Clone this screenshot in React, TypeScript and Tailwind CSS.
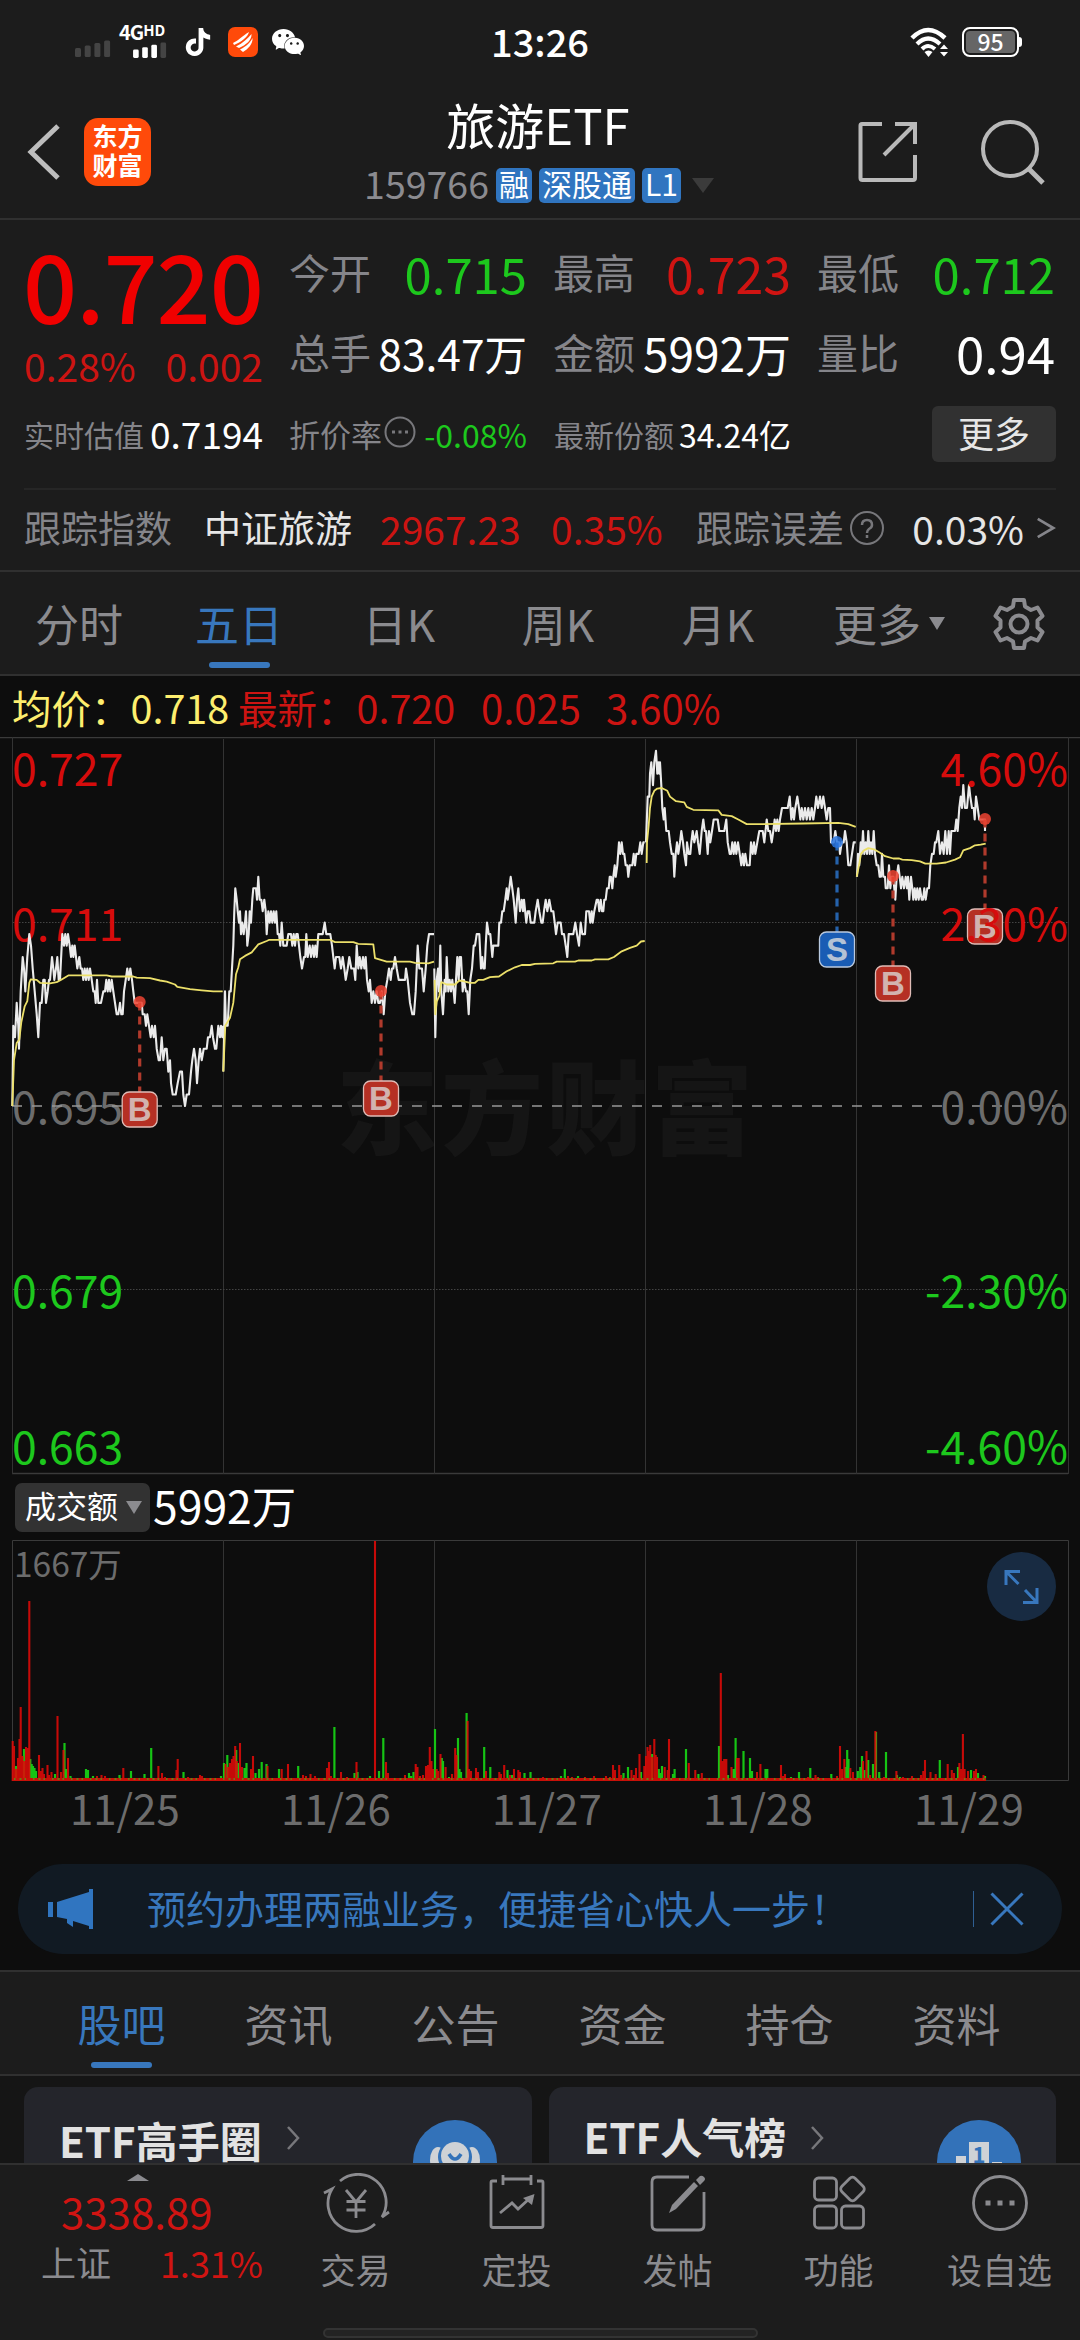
import type { ReactNode } from 'react';
import { SiTiktok, SiWechat } from 'react-icons/si';
import clsx from 'clsx';

const FONT = "font-['Noto_Sans_CJK_SC','Noto_Sans',sans-serif]";

/* ---------- chart data ---------- */

interface DayTrace {
  /** Horizontal origin of the samples, in thirds of a pixel. */
  origin: number;
  /** "x,tick" pairs; one tick is 0.001 above the 0.695 base price. */
  price: string;
  average: string;
}

const DAYS: DayTrace[] = [
  {
    origin: 0,
    price:
      '37,0 40,7 45,6 50,9 55,7 57,5 62,10 68,13 72,12 76,10 82,13 88,15 93,14 98,12 104,10 110,8 115,6 120,9 125,9 130,11 134,11 138,9 143,10 147,11 150,11 156,13 160,12 163,11 168,12 172,13 176,11 180,11 187,15 192,14 196,15 200,14 204,15 209,14 213,13 217,14 220,13 224,14 228,13 232,12 238,13 242,12 246,12 250,11 254,12 258,11 262,12 266,11 270,12 275,11 280,10 284,10 287,9 291,11 295,9 303,9 310,10 315,10 319,11 323,10 327,11 331,10 335,11 340,10 345,9 350,8 355,8 360,9 364,8 368,8 372,10 377,11 382,12 386,11 391,12 396,11 400,10 404,9 425,9 428,8 434,8 438,7 442,8 447,7 452,6 456,7 461,6 465,7 470,5 476,4 480,4 485,6 490,4 495,5 500,5 505,3 510,4 513,2 518,1 527,1 533,2 540,3 546,3 550,1 555,0 560,1 567,1 573,3 577,4 582,5 587,4 591,2 596,4 600,5 605,4 611,5 620,5 624,6 630,6 635,7 639,6 645,5 649,5 655,7 660,6 663,7 667,6 669,7',
    average:
      '37,0 42,4 50,5.5 58,5.8 64,7.3 74,8.7 82,9.15 88,10.75 92,11.05 110,11 120,10.75 150,10.7 170,10.8 185,11.05 205,11.4 320,11.4 335,11.3 400,11.3 410,11.2 450,11.15 480,10.95 500,10.85 525,10.6 532,10.4 570,10.2 605,10.1 640,10 668,10',
  },
  {
    origin: 0,
    price:
      '670,3 675,10 678,7 683,7 688,10 692,10 696,12 700,14 703,17 706,19 710,18 713,17 717,16 720,17 723,15 727,16 731,15 735,16 738,17 742,14 746,15 749,17 753,16 757,18 760,19 768,19 771,18 775,20 779,18 784,18 788,17 793,18 797,17 800,15 805,17 809,16 813,17 817,16 821,17 825,16 829,17 833,15 837,15 841,14 845,16 850,14 860,14 865,15 873,15 877,14 881,15 885,14 889,15 893,15 897,14 901,13 906,12 912,13 916,13 919,15 923,13 929,14 933,13 938,14 942,13 946,14 950,13 955,15 968,15 974,16 979,15 991,15 996,14 1000,13 1004,12 1008,13 1018,13 1023,12 1028,13 1033,12 1037,11 1043,12 1048,13 1054,12 1062,12 1066,11 1070,14 1075,12 1079,13 1084,12 1089,13 1093,12 1097,13 1101,11 1106,10 1110,11 1115,9 1120,10 1125,9 1130,10 1135,9 1140,9 1145,10 1151,8 1156,10 1162,11 1167,12 1172,11 1176,12 1180,12 1185,13 1190,12 1196,11 1215,11 1218,12 1223,11 1230,9 1237,8 1242,8 1247,10 1253,14 1258,12 1266,12 1271,10 1277,12 1282,14 1287,15 1302,15',
    average:
      '670,3 676,7 690,7.7 700,9 708,11.5 715,12.1 720,12.8 735,13.1 755,13.4 775,14.1 800,14.4 808,14.5 990,14.5 1005,14.3 1060,14.3 1075,14.15 1120,14.1 1125,12.9 1160,12.6 1230,12.6 1245,12.5 1285,12.45 1302,12.6',
  },
  {
    origin: 1260,
    price:
      '43,12 46,6 50,11 54,12 57,10 61,14 64,10 69,8 74,11 77,10 80,13 85,10 89,11 93,10 97,11 101,10 104,9 108,11 112,13 116,11 119,13 123,13 128,10 132,11 138,10 142,10 146,8 151,11 156,12 161,14 165,14 170,15 178,15 183,12 187,13 190,12 194,12 197,14 201,16 206,15 211,15 217,13 220,14 235,14 238,16 243,16 247,17 251,17 256,18 260,19 263,18 268,19 272,20 277,19 281,18 287,16 291,18 295,19 300,17 305,18 309,17 312,18 319,16 323,17 328,17 332,16 343,16 347,17 353,18 358,17 364,16 368,16 372,17 377,18 382,17 388,18 394,17 400,17 404,16 408,15 413,16 422,16 426,15 432,15 437,14 442,13 446,15 460,15 466,16 471,15 477,14 482,16 487,15 495,15 499,17 507,17 511,16 515,17 518,16 523,17 530,18 534,18 538,17 542,18 546,17 550,17 553,18 557,18 561,19 566,19 569,20 573,20 577,19 580,20 584,21 587,20 592,21 597,23 601,22 605,23 609,22 613,22 617,21 622,21 625,20 629,21 637,21 641,22 645,21 649,22 656,22 661,23 665,22 670,23 674,23',
    average:
      '44,11 46,8 50,9.1 58,9.6 64,10.8 80,10.6 105,10.6 118,10.95 130,10.9 150,10.75 165,10.75 175,11 190,11 210,11.25 237,11.3 260,11.75 285,12.1 305,12.3 330,12.3 345,12.4 400,12.45 410,12.6 465,12.6 475,12.7 515,12.7 525,12.8 565,12.8 582,13 605,13.5 630,13.8 650,14 663,14.35 674,14.4',
  },
  {
    origin: 1260,
    price:
      '678,23 683,27 688,27 690,29 694,30 699,28 703,30 708,31 712,29 715,30 718,29 720,30 724,28 727,26 731,25 734,26 739,24 746,24 750,23 755,22 760,22 763,20 767,22 771,23 775,22 780,23 784,24 789,23 793,22 798,21 801,23 806,22 811,22 814,23 818,24 823,23 830,24 834,23 839,22 845,24 850,25 854,24 858,24 863,22 867,24 871,23 876,24 881,25 893,25 898,24 913,24 919,25 923,23 929,22 933,22 937,23 941,22 945,23 949,22 954,23 959,22 964,21 968,22 972,21 976,22 981,21 989,21 993,23 998,22 1002,23 1006,22 1012,23 1018,24 1028,24 1033,23 1040,25 1045,24 1050,24 1055,23 1060,24 1064,25 1068,24 1072,25 1076,24 1080,25 1086,26 1103,26 1109,27 1114,25 1118,26 1122,25 1126,26 1132,27 1137,26 1141,25 1145,26 1150,25 1155,26 1160,25 1165,26 1170,25 1175,26 1180,25 1185,26 1189,27 1194,26 1200,27 1205,26 1210,27 1215,26 1220,25 1225,26 1230,26 1233,23 1241,23 1246,24 1251,23 1257,23 1260,22 1265,23 1271,23 1275,24 1280,23 1285,21 1291,21 1296,22 1301,23 1307,23',
    average:
      '680,21.2 681,23 686,24.5 690,26 695,27 703,27.5 712,27.7 725,27.75 742,27.5 750,27 768,26.6 793,26.5 800,26.1 820,25.85 895,25.8 905,25.4 935,25.3 955,25 980,24.6 1018,24.6 1150,24.65 1255,24.7 1285,24.6 1307,24.35',
  },
  {
    origin: 2220,
    price:
      '351,20 354,22 358,21 362,23 365,22 369,24 373,22 377,23 381,22 385,24 389,22 393,23 397,22 401,24 405,22 410,21 415,21 419,20 423,20 426,22 430,20 435,20 437,19 443,19 447,21 451,19 455,20 460,20 463,19 466,18 470,20 475,21 479,20 483,19 487,20 492,19 497,20 501,19 504,20 508,18 513,20 517,19 520,18 524,19 528,18 532,19 536,18 540,19 545,18 549,18 553,19 557,18 562,19 567,19 571,21 576,22 581,22 585,23 589,23 595,24 600,22 606,23 611,22 616,24 621,22 626,24 630,22 634,24 645,24 649,25 653,24 658,26 662,27 666,26 670,28 675,26 681,26 687,28 691,27 696,26 701,26 704,25 708,27 713,26 718,25 735,25 735,24',
    average:
      '350,20 357,21 363,22 372,22.3 385,22.5 402,22.4 420,22.1 435,21.8 460,21.6 478,21.6 487,21.5 515,21.45 540,21.35 556,21.15 590,21.15 618,21.25 645,21.5 660,21.7 670,22.3 690,22.5 705,22.75 722,22.8 737,22.9',
  },
];

// "x:height" pairs per colour, in pixels.
const VOLUME_UP =
  '12.7:40 14:35 16:12 18:23 19.5:42 20.7:74 22.5:25 24.3:20 26:34 27.5:33 29.3:180 39:26 41:10 42.5:13 44:7 47.5:16 49:6 51.5:9 57.5:65 61:9 63.5:31 68:23 97:5 101.5:6 105:5 123.3:13 158.4:15 162:8 165:4 176.5:11 177.7:22 188:4 200:6 202:5 225.5:17 228:14 230:18 232:22 233.5:25 235.2:35 236.8:20 240:38 242:14 251:12 253:25 267.5:15 281.7:12 288:17 303:6 306:5 310.5:7 315:5 327:13 329:19 331:5 341:9 347:4 356.5:19 375:240 386:19 388:8 405:6 415.7:17 417.5:14 420:5 423:6 426:15 428:16 429.8:34 431.5:20 433:12 436.7:12 438:10 440.5:27 445.6:14 452:7 455.2:33 456.5:26 467.6:60 469:12 471:10 476:13 478:9 486:10 499.3:9 501:7 504.2:16 510:6 514:12 518.3:11 520:9 543:4 568:5 572:4 585:4 594:5 606:5 610:4 613:16 615:11 619.2:16 621:6 631.5:11 634:6 636:13 639.5:27 644.3:15 646:25 647.5:34 648.8:30 650.2:36 652:24 654.3:42 655.7:26 657:24 664.7:14 667.7:11 669:42 688.8:18 695.3:11 701.8:8 720.8:108 722.9:20 724.2:22 726.3:22 731.5:14 737:23 738.7:23 757:9 760.4:17 781:16 783:5 785:7 808:4 815.5:6 818:4 837:5 840:35 842:12 844.4:22 850.3:13 853:9 863:20 866.5:30 870:6 875.4:50 884:4 896.4:10 903:4 912:5 921:6 923.3:10 925:21 930.5:9 935.7:7 947.7:17 951.8:11 954:8 959.4:18 961:12 962.9:47 964.6:12 968:10 974:10 976:12 983.5:6';
const VOLUME_DOWN =
  '16:15 24:32 30.3:22 31.7:17 33:15 34.5:13 36:10 55:7 64.5:38 66:12 70.5:5 86:12 88:11 93:5 119.5:6 131:10 144.5:7 151.2:33 183.5:9 221:5 224:18 227.3:26 236.2:31 238:18 244.5:13 246.5:18 255.5:8 259:12 261.7:19 266.5:17 279:12 298.2:15 334.4:54 354.5:8 357.5:9 370:5 379:10 383.3:43 409:8 411:5 413.5:9 435:52 441.8:23 443:20 449:4 458:43 459.5:12 461:9 466.6:68 484.2:34 490.3:14 507.5:11 512:6 524.5:8 530.5:9 561:5 564.8:12 578:5 623.5:8 628:14 641:9 652:27 658.8:12 660:8 662:15 673:7 674.6:12 686:32 698.4:7 719:35 728:6 733.5:12 735.6:43 743.5:30 750:23 752:10 765.5:12 767.3:12 791:4 799:9 810.3:13 831.3:7 845.5:14 847.2:31 848.5:22 857.8:10 860.3:14 862:25 864.4:11 868.2:21 873:17 876:49 879.2:9 886:29 897:6 900:4 939.8:21 958:14 971:11 978:8 985:5';

const CELL_LINES = [223.5, 434.5, 645.5, 856.5];

const MARKERS = [
  { x: 139.7, dot: 265, box: 355, kind: 'B' },
  { x: 381, dot: 254, box: 344, kind: 'B' },
  { x: 837, dot: 105, box: 195, kind: 'S' },
  { x: 893, dot: 139, box: 229, kind: 'B' },
  { x: 985, dot: 82, box: 172, kind: 'B' },
];

const AXIS = [
  { y: 49, price: '0.727', change: '4.60%', fill: '#d60c0c' },
  { y: 204, price: '0.711', change: '2.30%', fill: '#d60c0c' },
  { y: 387, price: '0.695', change: '0.00%', fill: '#6c6c6c' },
  { y: 571, price: '0.679', change: '-2.30%', fill: '#1dc81d' },
  { y: 727, price: '0.663', change: '-4.60%', fill: '#1dc81d' },
];

function tracePoints(points: string, origin: number) {
  return points
    .split(' ')
    .map((pair) => {
      const [x, tick] = pair.split(',').map(Number);
      return `${((origin + x) / 3).toFixed(1)},${(369 - tick * 11.46).toFixed(1)}`;
    })
    .join(' ');
}

function barsPath(bars: string) {
  return bars
    .split(' ')
    .map((bar) => {
      const [x, height] = bar.split(':').map(Number);
      return `M${x} 241V${241 - height}`;
    })
    .join('');
}

/* ---------- header ---------- */

function SignalBars({ className, fills }: { className: string; fills: string[] }) {
  return (
    <svg viewBox="0 0 36 17" className={className}>
      {fills.map((fill, i) => (
        <rect key={i} x={i * 9.7} y={8 - i * 2.5} width="6" height={9 + i * 2.5} rx="1.5" fill={fill} />
      ))}
    </svg>
  );
}

function StatusBar() {
  return (
    <div className="flex h-[84px] items-center pl-[75px] pr-[58px] text-white">
      <SignalBars className="mt-3 h-[17px] w-9" fills={['#444', '#444', '#444', '#444']} />
      <div className="ml-2 flex h-8 w-[48px] flex-col">
        <div className="flex h-4 items-start text-[20px] font-bold leading-[12px] tracking-[-1px]">
          4G<span className="text-[15px] leading-[8px] tracking-[0px]">HD</span>
        </div>
        <SignalBars className="ml-[13px] h-4 w-9" fills={['#fff', '#fff', '#fff', '#444']} />
      </div>
      <SiTiktok className="ml-[17px] h-[30px] w-[28px]" />
      <div className="ml-4 flex size-[30px] items-center justify-center rounded-[7px] bg-[#ff4a0a]">
        <svg viewBox="0 0 30 30" className="size-[30px]" fill="#fff">
          <path d="M5 16C10 14 14 9 21 5C20 10 13 15 6 18Z" />
          <path d="M8 19.500C15 16 20 11 23.500 7C24 13 18 18 11 21Z" />
          <path d="M12 22.500C19 19 22.500 15 24.500 11C25 17 20 22 15 25Z" />
        </svg>
      </div>
      <SiWechat className="ml-[14px] size-[32px]" />
      <div className="ml-[187px] mt-[-3px] text-[38px] font-medium leading-[38px]">13:26</div>
      <svg viewBox="0 0 40 30" className="ml-auto h-[30px] w-10" fill="none" stroke="#fff">
        <path d="M2 11Q18 -5 35 11" strokeWidth="4.5" />
        <path d="M7 17Q18 6 30 17" strokeWidth="4.2" />
        <path d="M12 22Q18 16 25 22" strokeWidth="4" />
        <path d="M14.500 25Q18.500 22 22.500 25L18.500 30Z" fill="#fff" stroke="none" />
        <path d="M30 22L34 17.500L38 22ZM30 25L34 29.500L38 25Z" fill="#fff" stroke="none" />
      </svg>
      <div className="ml-3 flex items-center">
        <div className="flex h-[30px] w-[57px] items-center justify-center rounded-[8px] border-[2.5px] border-white bg-[#1c1c1c] p-[2px]">
          <div className="flex h-full w-full items-center justify-center rounded-[4px] bg-[#666] pb-[3px] text-[23px] font-medium leading-[20px]">
            95
          </div>
        </div>
        <div className="h-[10px] w-[3px] rounded-r-sm bg-white" />
      </div>
    </div>
  );
}

function Badge({ children }: { children: ReactNode }) {
  return (
    <span className="flex h-[35px] items-center rounded-[5px] bg-[#3075c0] px-[3px] pb-[4px] text-[30px] leading-none text-white">
      {children}
    </span>
  );
}

function TitleBar() {
  return (
    <header className="flex h-[136px] items-start border-b-2 border-[#303030] pl-[27px] pr-[34px]">
      <svg viewBox="0 0 34 58" className="mt-[39px] h-[58px] w-[34px]" fill="none" stroke="#bdbdbd" strokeWidth="5">
        <path d="M31 3L4 29L31 55" />
      </svg>
      <div className="ml-[23px] mt-[34px] flex h-[68px] w-[67px] flex-col items-center justify-center rounded-[14px] bg-[#ff4a0a] pb-[5px] text-[25px] font-bold leading-[29px] text-white">
        <span>东方</span>
        <span>财富</span>
      </div>
      <div className="ml-[212px] flex w-[352px] flex-col items-center">
        <h1 className="mr-[2px] mt-[12px] text-[49px] leading-[56px] text-white">旅游ETF</h1>
        <div className="mt-[11px] flex h-[44px] items-center gap-[7px]">
          <span className="pb-1 text-[37.5px] leading-10 text-[#8b8b90]">159766</span>
          <Badge>融</Badge>
          <Badge>深股通</Badge>
          <Badge>L1</Badge>
          <svg viewBox="0 0 22 15" className="ml-1 h-[15px] w-[22px]" fill="#3b3b3b">
            <path d="M0 0H22L11 15Z" />
          </svg>
        </div>
      </div>
      <svg viewBox="0 0 60 62" className="ml-auto mt-[37px] h-[62px] w-[60px]" fill="none" stroke="#b9b9b9" strokeWidth="4">
        <path d="M24 3H4Q2.500 3 2.500 4.500V57Q2.500 59 4.500 59H55Q57 59 57 57V34" />
        <path d="M37 3H57V23M57 3L26 34" />
      </svg>
      <svg viewBox="0 0 66 66" className="ml-[62px] mt-[35px] size-[66px]" fill="none" stroke="#b9b9b9" strokeWidth="4">
        <circle cx="30" cy="30" r="27" />
        <path d="M49 50L63 64" strokeWidth="5" />
      </svg>
    </header>
  );
}

/* ---------- quote ---------- */

function Stat({ label, value, tone }: { label: string; value: string; tone: string }) {
  return (
    <div className="flex h-20 items-center justify-between whitespace-nowrap">
      <span className="-ml-px text-[41px] text-[#85858a]">{label}</span>
      <span className={clsx('mt-px', tone)}>{value}</span>
    </div>
  );
}

function QuotePanel() {
  return (
    <section className="flex h-[352px] flex-col border-b-2 border-[#303030] px-6 pt-[12px]">
      <div className="grid h-[168px] grid-cols-[239px_237px_237px_237px] gap-x-[27px]">
        <div className="flex flex-col">
          <span className="-ml-px mt-[2px] text-[95px] font-medium leading-[98px] tracking-[-1px] text-[#f00000]">0.720</span>
          <div className="flex h-[66px] items-center justify-between text-[39px] leading-[50px] text-[#cc1412]">
            <span>0.28%</span>
            <span>0.002</span>
          </div>
        </div>
        <div>
          <Stat label="今开" value="0.715" tone="text-[49px] text-[#1dc81d]" />
          <Stat label="总手" value="83.47万" tone="text-[42.5px] text-white" />
        </div>
        <div>
          <Stat label="最高" value="0.723" tone="text-[50px] text-[#d01412]" />
          <Stat label="金额" value="5992万" tone="text-[46px] text-white" />
        </div>
        <div>
          <Stat label="最低" value="0.712" tone="text-[49px] text-[#1dc81d]" />
          <Stat label="量比" value="0.94" tone="text-[51px] text-white" />
        </div>
      </div>
      <div className="grid h-[68px] grid-cols-[239px_237px_237px_238px] items-center gap-x-[27px] whitespace-nowrap text-[30px] text-[#85858a]">
        <div className="flex items-center justify-between">
          实时估值<span className="text-[37px] text-white">0.7194</span>
        </div>
        <div className="flex items-center justify-between">
          <span className="-ml-px text-[31px]">折价率</span>
          <svg viewBox="0 0 32 32" className="-ml-[6px] -mt-1 size-8" fill="none" stroke="#77777b" strokeWidth="2">
            <circle cx="16" cy="16" r="14.500" />
            <path d="M8 16H11M14.500 16H17.500M21 16H24" strokeWidth="3" />
          </svg>
          <span className="text-[32px] text-[#1dc81d]">-0.08%</span>
        </div>
        <div className="flex items-center justify-between">
          最新份额<span className="text-[32px] text-white">34.24亿</span>
        </div>
        <button
          type="button"
          className="ml-auto flex h-[56px] w-[124px] items-center justify-center rounded-[6px] bg-[#313131] pb-[4px] text-[36px] text-[#e6e6e6]"
        >
          更多
        </button>
      </div>
      <div className="mt-5 h-[2px] w-full bg-[#262626]" />
      <div className="flex h-[76px] items-center whitespace-nowrap text-[37px] text-[#85858a]">
        <span className="w-[180px]">跟踪指数</span>
        <span className="w-[176px] text-[#e6e6e6]">中证旅游</span>
        <span className="w-[171px] text-[39px] text-[#cc1412]">2967.23</span>
        <span className="w-[145px] text-[39px] text-[#cc1412]">0.35%</span>
        <span>跟踪误差</span>
        <svg viewBox="0 0 36 36" className="ml-[5px] size-[36px]" fill="none" stroke="#77777b" strokeWidth="2">
          <circle cx="18" cy="18" r="16" />
          <path d="M13 15Q13 10 18 10T23 15Q23 17.500 20 19Q18 20.500 18 23M18 25V28" strokeWidth="2.500" />
        </svg>
        <span className="ml-auto text-[39px] text-[#e6e6e6]">0.03%</span>
        <svg viewBox="0 0 20 24" className="ml-[12px] h-[22px] w-5" fill="none" stroke="#85858a" strokeWidth="3">
          <path d="M1 2L18 12L1 22" />
        </svg>
      </div>
    </section>
  );
}

function Tab({ label, active, className }: { label: string; active?: boolean; className?: string }) {
  return (
    <div className={clsx('flex flex-col items-center', className)}>
      <span className={clsx('text-[44px] leading-[66px]', active ? 'text-[#3877bd]' : 'text-[#8b8b8f]')}>{label}</span>
      {active && <span className="mt-[6px] h-[6px] w-[61px] rounded-full bg-[#3877bd]" />}
    </div>
  );
}

function PeriodTabs() {
  return (
    <nav className="flex h-[104px] items-start whitespace-nowrap border-b-2 border-[#303030] pl-[35px] pt-[18px]">
      <Tab label="分时" className="w-[88px]" />
      <Tab label="五日" active className="ml-[72px] w-[88px]" />
      <Tab label="日K" className="ml-[74px] w-[84px]" />
      <Tab label="周K" className="ml-[75px] w-[84px]" />
      <Tab label="月K" className="ml-[76px] w-[84px]" />
      <Tab label="更多" className="ml-[73px] w-[88px]" />
      <svg viewBox="0 0 16 13" className="ml-[8px] mt-[27px] h-[13px] w-4" fill="#8b8b8f">
        <path d="M0 0H16L8 13Z" />
      </svg>
      <svg viewBox="0 0 52 52" className="ml-[48px] mt-[8px] size-[52px]" fill="none" stroke="#8b8b8f" strokeWidth="4">
        <path
          strokeLinejoin="round"
          d="M21 2H31L32 8.500L38 12L44.500 9.500L49.500 18L44.500 22.500V29.500L49.500 34L44.500 42.500L38 40L32 43.500L31 50H21L20 43.500L14 40L7.500 42.500L2.500 34L7.500 29.500V22.500L2.500 18L7.500 9.500L14 12L20 8.500Z"
        />
        <circle cx="26" cy="26" r="8.500" />
      </svg>
    </nav>
  );
}

/* ---------- charts ---------- */

function PriceChart() {
  return (
    <svg viewBox="0 0 1080 738" className="block h-[738px] w-[1080px]" fill="none">
      <text x="336" y="410" fontSize="102" fontWeight="900" letterSpacing="3" fill="#151515">
        东方财富
      </text>
      <path d="M0 .5H1080M12 736.500H1068" stroke="#3a3a3a" strokeWidth="1.500" />
      <path d={`M12.500 0V737M1068.500 0V737${CELL_LINES.map((x) => `M${x} 2V737`).join('')}`} stroke="#333" />
      <path d="M13 185.500H1068M13 552.500H1068" stroke="#444" strokeDasharray="1.500 1.500" />
      {AXIS.map((row) => (
        <text key={row.price} x="12" y={row.y} fontSize="44.500" fill={row.fill}>
          {row.price}
        </text>
      ))}
      <path d="M12 369H1068" stroke="#969696" strokeWidth="1.600" strokeDasharray="10 10" />
      {DAYS.map((day, i) => (
        <g key={i} strokeLinejoin="round">
          <polyline points={tracePoints(day.price, day.origin)} stroke="#ebebeb" strokeWidth="2.100" />
          <polyline points={tracePoints(day.average, day.origin)} stroke="#ece06a" strokeWidth="1.800" />
        </g>
      ))}
      {MARKERS.map(({ x, dot, box, kind }) => {
        const sell = kind === 'S';
        return (
          <g key={x}>
            <path
              d={`M${x} ${dot}V${box}`}
              stroke={sell ? '#2562ab' : '#b03a2c'}
              strokeWidth="3.200"
              strokeDasharray="8 6"
              strokeDashoffset="-0.500"
            />
            <circle cx={x} cy={dot} r="6" fill={sell ? '#2a75df' : '#ee4432'} fillOpacity="0.85" />
            <rect
              x={x - 17.5}
              y={box}
              width="35"
              height="35"
              rx="7"
              fill={sell ? '#195cb4' : '#b53024'}
              stroke={sell ? '#b9c9df' : '#dfbcb7'}
              strokeWidth="1.300"
            />
            <text
              x={x}
              y={box + 29}
              fontSize="33"
              fontWeight="700"
              textAnchor="middle"
              fontFamily="Liberation Sans, sans-serif"
              fill={sell ? '#b4c2d5' : '#d2b3af'}
            >
              {kind}
            </text>
          </g>
        );
      })}
      {AXIS.map((row) => (
        <text key={row.change} x="1068" y={row.y} fontSize="44.500" textAnchor="end" fill={row.fill}>
          {row.change}
        </text>
      ))}
    </svg>
  );
}

function VolumeChart() {
  return (
    <svg viewBox="0 0 1080 242" className="block h-[242px] w-[1080px]" fill="none">
      <path d="M12.500 .5H1068.500V240.500H12.500Z" stroke="#3a3a3a" />
      <path d={CELL_LINES.map((x) => `M${x} 0V241`).join('')} stroke="#333" />
      <text x="14" y="37" fontSize="33.500" fill="#6c6c6c">
        1667万
      </text>
      <path d={barsPath(VOLUME_DOWN)} stroke="#16c414" strokeWidth="2.200" />
      <path d={barsPath(VOLUME_UP)} stroke="#e00a08" strokeWidth="2.100" strokeOpacity="0.88" />
      <path d="M12 239.500H986" stroke="#c81008" strokeWidth="3" />
      <path d="M14 239H986" stroke="#6f7a10" strokeWidth="2" strokeDasharray="1.500 4 2 3 1.500 7" />
      <circle cx="1021.500" cy="46.500" r="34.500" fill="#182b42" />
      <path
        d="M1006 45V31.500H1020M1007 32.500L1018.500 44M1037 48V62.500H1023M1036 61.500L1025 50"
        stroke="#3877bd"
        strokeWidth="3"
      />
    </svg>
  );
}

function ChartSection() {
  return (
    <section className="flex h-[1294px] flex-col bg-[#0d0d0d]">
      <div className="flex h-[61px] items-center whitespace-nowrap pl-[12px] text-[40px] leading-[56px]">
        <span className="w-[226px] text-[39.5px] text-[#fdee6e]">均价：0.718</span>
        <span className="w-[243px] text-[39.5px] text-[#cc1412]">最新：0.720</span>
        <span className="w-[125px] text-[#cc1412]">0.025</span>
        <span className="text-[#cc1412]">3.60%</span>
      </div>
      <PriceChart />
      <div className="flex h-[65px] items-center pl-[15px]">
        <div className="flex h-[49px] w-[135px] items-center rounded-[7px] bg-[#323232] pb-[4px] pl-[10px] text-[31px] text-white">
          成交额
          <svg viewBox="0 0 16 13" className="ml-[8px] mt-1 h-[13px] w-4" fill="#8b8b8f">
            <path d="M0 0H16L8 13Z" />
          </svg>
        </div>
        <span className="ml-[3px] pb-[5px] text-[44.500px] leading-[52px] text-white">5992万</span>
      </div>
      <VolumeChart />
      <div className="flex h-[82px] items-start pl-[70px] text-[42px] leading-[50px] text-[#6c6c6c]">
        {['11/25', '11/26', '11/27', '11/28', '11/29'].map((date) => (
          <span key={date} className="w-[211px] shrink-0 last:w-[120px]">
            {date}
          </span>
        ))}
      </div>
      <div className="mx-[18px] flex h-[90px] items-center rounded-full bg-[#111a23] pl-[30px] pr-[38px]">
        <svg viewBox="0 0 46 40" className="h-10 w-[46px]" fill="#3075c0">
          <path d="M0 13H5V28H0ZM9 13L41 3V0H45V40H41V37L25 32V38L19 34V30L9 28Z" />
        </svg>
        <p className="ml-[53px] pb-[5px] text-[39px] leading-[50px] text-[#3877bd]">预约办理两融业务，便捷省心快人一步！</p>
        <div className="ml-auto mr-4 h-9 w-px bg-[#2f5f93]" />
        <svg viewBox="0 0 34 34" className="size-[34px]" fill="none" stroke="#3877bd" strokeWidth="3">
          <path d="M1.500 1.500L32.500 32.500M32.500 1.500L1.500 32.500" />
        </svg>
      </div>
    </section>
  );
}

/* ---------- community ---------- */

function InfoTabs() {
  return (
    <nav className="flex h-[106px] items-start border-y-2 border-[#303030] pl-[38px] pt-[18px]">
      <Tab label="股吧" active className="w-[167px]" />
      {['资讯', '公告', '资金', '持仓', '资料'].map((label) => (
        <Tab key={label} label={label} className="w-[167px]" />
      ))}
    </nav>
  );
}

function EntryCard({ title, className, children }: { title: string; className?: string; children: ReactNode }) {
  return (
    <div className="flex h-[120px] flex-1 items-start rounded-[14px] bg-[#24252b] pl-[35px] pr-[35px]">
      <h2 className={clsx('text-[42px] font-bold leading-[50px] text-[#e2e2e2]', className)}>{title}</h2>
      <svg viewBox="0 0 14 24" className="ml-6 mt-[39px] h-6 w-[14px]" fill="none" stroke="#77777b" strokeWidth="2.500">
        <path d="M2 1L12 12L2 23" />
      </svg>
      <svg viewBox="0 0 84 84" className="ml-auto mt-[33px] size-[84px]">
        <circle cx="42" cy="42" r="42" fill="#3372b9" />
        {children}
      </svg>
    </div>
  );
}

function CommunityCards() {
  return (
    <section className="flex h-[87px] gap-[17px] overflow-hidden bg-[#151515] px-6 pt-[11px]">
      <EntryCard title="ETF高手圈" className="mt-[28px]">
        <ellipse cx="25" cy="40" rx="8" ry="13" fill="#cfd2d6" />
        <ellipse cx="59" cy="40" rx="8" ry="13" fill="#cfd2d6" />
        <circle cx="42" cy="37" r="17" fill="#3372b9" />
        <circle cx="42" cy="36" r="14" fill="#cfd2d6" />
        <path d="M36 34Q42 44 48 34" fill="none" stroke="#3372b9" strokeWidth="3.500" />
      </EntryCard>
      <EntryCard title="ETF人气榜" className="mt-[24px]">
        <path d="M19 36H29V60H19ZM32 22H52V60H32ZM55 42H65V60H55Z" fill="#cfd2d6" />
        <text x="42" y="43" fontSize="22" fontWeight="700" textAnchor="middle" fill="#3372b9">
          1
        </text>
      </EntryCard>
    </section>
  );
}

/* ---------- bottom bar ---------- */

function NavItem({ label, children }: { label: string; children: ReactNode }) {
  return (
    <div className="flex w-[161px] flex-col items-center whitespace-nowrap">
      <svg viewBox="0 0 68 60" className="h-[60px] w-[68px]" fill="none" stroke="#8b8b8f" strokeWidth="2.800">
        {children}
      </svg>
      <span className="mt-[13px] text-[35px] leading-[46px] text-[#8b8b8f]">{label}</span>
    </div>
  );
}

function BottomBar() {
  return (
    <footer className="flex h-[177px] flex-col border-t-2 border-[#303030] bg-[#1c1c1c]">
      <div className="flex h-[163px] pt-[8px]">
        <div className="flex w-[275px] flex-col pl-[41px]">
          <svg viewBox="0 0 22 7" className="ml-[86px] mt-[1px] h-[7px] w-[22px]" fill="#8b8b8f">
            <path d="M0 7L11 0L22 7Z" />
          </svg>
          <span className="ml-[20px] mt-[6px] text-[42px] leading-[48px] text-[#d01412]">3338.89</span>
          <div className="mt-[4px] flex w-[222px] items-center justify-between text-[35px] leading-[46px] text-[#8b8b8f]">
            上证<span className="text-[36px] text-[#d01412]">1.31%</span>
          </div>
        </div>
        <NavItem label="交易">
          <path d="M18 8A28 28 0 0 1 60 44L67 39" />
          <path d="M53 51A28 28 0 0 1 10 16L2 20" />
          <path d="M24 17L34 29L44 17M34 29V45M24.500 28.500H43.500M24.500 37H43.500" />
        </NavItem>
        <NavItem label="定投">
          <path d="M14 8H9.500Q8 8 8 9.500V52.500Q8 54.500 10 54.500H58Q60 54.500 60 52.500V9.500Q60 8 58.500 8H54M20 2V12M48 2V12M20 6H48" />
          <path d="M17 40L29 30L35 36L46 26" />
          <path d="M40 25L51.500 21L49 32Z" fill="#8b8b8f" stroke="none" />
        </NavItem>
        <NavItem label="发帖">
          <path d="M45 4H13Q8 4 8 9V52Q8 57 13 57H55Q60 57 60 52V19" />
          <path d="M25 40L28 32L50 9L54 13L32 36Z" fill="#8b8b8f" stroke="none" />
          <path d="M52 7L56 3Q58 2 60 4T60 8L56 12Z" fill="#8b8b8f" stroke="none" />
        </NavItem>
        <NavItem label="功能">
          <rect x="9.500" y="5" width="22" height="22" rx="4" />
          <rect x="9.500" y="33" width="22" height="22" rx="4" />
          <rect x="36.500" y="33" width="22" height="22" rx="4" />
          <rect x="38" y="6.500" width="19" height="19" rx="4" transform="rotate(45 47.5 16)" />
        </NavItem>
        <NavItem label="设自选">
          <circle cx="34" cy="30" r="26.500" />
          <path d="M19.500 30H24.500M31.500 30H36.500M43.500 30H48.500" strokeWidth="5" />
        </NavItem>
      </div>
      <div className="mx-auto h-[10px] w-[435px] rounded-full border-2 border-[#333] bg-[#232323]" />
    </footer>
  );
}

export default function App() {
  return (
    <main className={clsx('flex h-[2340px] w-[1080px] flex-col overflow-hidden bg-[#1c1c1c]', FONT)}>
      <StatusBar />
      <TitleBar />
      <QuotePanel />
      <PeriodTabs />
      <ChartSection />
      <InfoTabs />
      <CommunityCards />
      <BottomBar />
    </main>
  );
}
